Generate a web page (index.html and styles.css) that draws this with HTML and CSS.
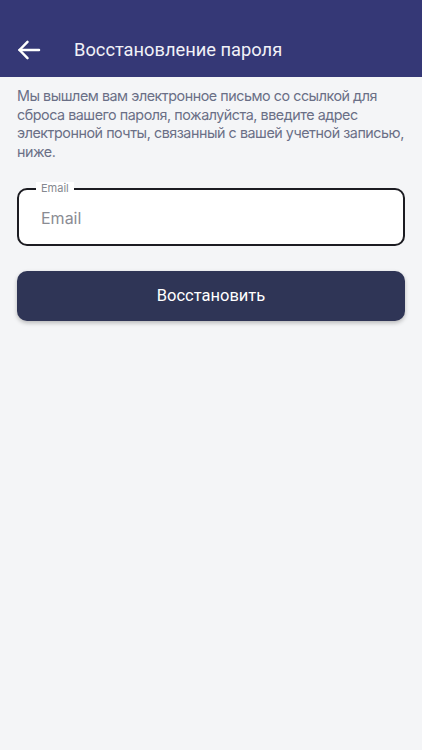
FILE: index.html
```html
<!DOCTYPE html>
<html lang="ru">
<head>
    <meta charset="UTF-8">
    <meta name="viewport" content="width=device-width, initial-scale=1.0">
    <title>Восстановление пароля</title>
    <link rel="stylesheet" href="styles.css">
</head>
<body>
    <header class="topbar">
        <button class="back-btn" aria-label="Назад">
            <svg width="24" height="24" viewBox="0 0 24 24" fill="none" stroke="#fff" stroke-width="2.5" stroke-linecap="round" stroke-linejoin="round">
                <path d="M22 12H2.5"/>
                <path d="M10.5 3.8L2.5 12L10.5 20.2"/>
            </svg>
        </button>
        <h1>Восстановление пароля</h1>
    </header>

    <main class="content">
        <p class="hint">Мы вышлем вам электронное письмо со ссылкой для сброса вашего пароля, пожалуйста, введите адрес электронной почты, связанный с вашей учетной записью, ниже.</p>

        <div class="field">
            <label for="email">Email</label>
            <input type="email" id="email" placeholder="Email">
        </div>

        <button class="submit">Восстановить</button>
    </main>
</body>
</html>
```

FILE: styles.css
```css
body {
    margin: 0;
    background: #f4f5f7;
    font-family: Roboto, "Noto Sans", sans-serif;
    min-height: 100vh;
}

.topbar {
    background: #353876;
    height: 77px;
    display: flex;
    align-items: flex-end;
    padding: 0 0 15px 17px;
    box-sizing: border-box;
}

.back-btn {
    background: none;
    border: none;
    padding: 0;
    width: 24px;
    height: 24px;
    display: flex;
    align-items: center;
    justify-content: center;
    cursor: pointer;
}

.topbar h1 {
    margin: 0 0 0 33px;
    color: #f1f1f7;
    font-size: 18.3px;
    font-weight: 400;
    line-height: 24px;
}

.content {
    padding: 10px 17px;
}

.hint {
    margin: 0;
    font-family: Inter, "Noto Sans", sans-serif;
    font-size: 14.3px;
    line-height: 18.7px;
    color: #6a6f86;
    letter-spacing: -0.45px;
}

.field {
    margin-top: 26px;
    height: 58px;
    box-sizing: border-box;
    border: 2px solid #1c1c22;
    border-radius: 10px;
    background: #fff;
    position: relative;
    display: flex;
    align-items: center;
    padding: 2px 22px 0;
}

.field label {
    position: absolute;
    top: -8px;
    left: 17px;
    padding: 0 5px;
    background: #fff;
    font-family: Inter, "Noto Sans", sans-serif;
    font-size: 11px;
    line-height: 13px;
    color: #85888f;
}

.field input {
    border: none;
    outline: none;
    background: transparent;
    font-family: Inter, "Noto Sans", sans-serif;
    font-size: 16px;
    color: #222;
    padding: 0;
    width: 100%;
}

.field input::placeholder {
    color: #8a8c93;
}

.submit {
    display: block;
    width: 100%;
    height: 50px;
    margin-top: 25px;
    border: none;
    border-radius: 10px;
    background: #2f3556;
    color: #fff;
    font-family: Roboto, "Noto Sans", sans-serif;
    font-size: 16.5px;
    cursor: pointer;
    box-shadow: 0 2px 4px rgba(0,0,0,0.25);
}
```
